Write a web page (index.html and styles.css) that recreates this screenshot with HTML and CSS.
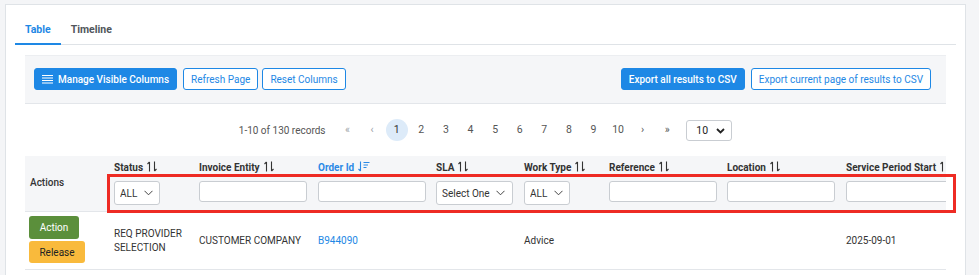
FILE: index.html
```html
<!DOCTYPE html>
<html>
<head>
    <title>Orders</title>
    <link rel="stylesheet" href="styles.css">
</head>
<body>
    <div class="card">
        <div class="tabs">
            <a class="tab active">Table</a>
            <a class="tab">Timeline</a>
        </div>
        <div class="content">
            <div class="toolbar">
                <div class="tool-group">
                    <button class="btn btn-primary">
                        <svg class="btn-icon" width="11" height="9" viewBox="0 0 11 9">
                            <path d="M0 0.5H11M0 3H11M0 5.5H11M0 8H11" stroke="#fff" stroke-width="1.1"/>
                        </svg>
                        Manage Visible Columns
                    </button>
                    <button class="btn btn-outline gap-6">Refresh Page</button>
                    <button class="btn btn-outline gap-4">Reset Columns</button>
                </div>
                <div class="tool-group">
                    <button class="btn btn-primary">Export all results to CSV</button>
                    <button class="btn btn-outline gap-6">Export current page of results to CSV</button>
                </div>
            </div>

            <div class="pager">
                <span class="pager-count">1-10 of 130 records</span>
                <div class="pages">
                    <span class="page muted">&laquo;</span>
                    <span class="page muted">&lsaquo;</span>
                    <span class="page current">1</span>
                    <span class="page">2</span>
                    <span class="page">3</span>
                    <span class="page">4</span>
                    <span class="page">5</span>
                    <span class="page">6</span>
                    <span class="page">7</span>
                    <span class="page">8</span>
                    <span class="page">9</span>
                    <span class="page">10</span>
                    <span class="page">&rsaquo;</span>
                    <span class="page">&raquo;</span>
                </div>
                <div class="per-page">
                    <select><option>10</option></select>
                    <svg class="chev-bold" width="9" height="6" viewBox="0 0 9 6">
                        <path d="M1 1L4.5 4.5L8 1" fill="none" stroke="#222" stroke-width="1.8"/>
                    </svg>
                </div>
            </div>

            <div class="grid-area">
                <div class="grid-wrap">
                    <table class="grid">
                        <colgroup>
                            <col style="width: 84px">
                            <col style="width: 85px">
                            <col style="width: 119px">
                            <col style="width: 118px">
                            <col style="width: 88px">
                            <col style="width: 85px">
                            <col style="width: 118px">
                            <col style="width: 119px">
                            <col style="width: 130px">
                        </colgroup>
                        <thead>
                            <tr>
                                <th class="actions-head">Actions</th>
                                <th>
                                    <div class="label">Status <svg class="sort" width="10" height="11" viewBox="0 0 10 11"><path d="M2.5 10.5V1M0.5 3L2.5 1M7.5 0.5V10M9.5 8L7.5 10" fill="none" stroke="#333" stroke-width="1.1"/></svg></div>
                                    <div class="sel sel-sm"><select><option>ALL</option></select><svg class="chev" width="9" height="6" viewBox="0 0 9 6"><path d="M0.5 0.8L4.5 4.8L8.5 0.8" fill="none" stroke="#444" stroke-width="1"/></svg></div>
                                </th>
                                <th>
                                    <div class="label">Invoice Entity <svg class="sort" width="10" height="11" viewBox="0 0 10 11"><path d="M2.5 10.5V1M0.5 3L2.5 1M7.5 0.5V10M9.5 8L7.5 10" fill="none" stroke="#333" stroke-width="1.1"/></svg></div>
                                    <input type="text" class="filter">
                                </th>
                                <th>
                                    <div class="label label-active">Order Id <svg class="sort" width="12" height="11" viewBox="0 0 12 11"><path d="M2.5 0.5V10M0.5 8L2.5 10M5.5 1.5H11.5M5.5 4H10M5.5 6.5H8.5" fill="none" stroke="#2b8ae6" stroke-width="1.1"/></svg></div>
                                    <input type="text" class="filter">
                                </th>
                                <th>
                                    <div class="label">SLA <svg class="sort" width="10" height="11" viewBox="0 0 10 11"><path d="M2.5 10.5V1M0.5 3L2.5 1M7.5 0.5V10M9.5 8L7.5 10" fill="none" stroke="#333" stroke-width="1.1"/></svg></div>
                                    <div class="sel sel-md"><select><option>Select One</option></select><svg class="chev" width="9" height="6" viewBox="0 0 9 6"><path d="M0.5 0.8L4.5 4.8L8.5 0.8" fill="none" stroke="#444" stroke-width="1"/></svg></div>
                                </th>
                                <th>
                                    <div class="label">Work Type <svg class="sort" width="10" height="11" viewBox="0 0 10 11"><path d="M2.5 10.5V1M0.5 3L2.5 1M7.5 0.5V10M9.5 8L7.5 10" fill="none" stroke="#333" stroke-width="1.1"/></svg></div>
                                    <div class="sel sel-sm"><select><option>ALL</option></select><svg class="chev" width="9" height="6" viewBox="0 0 9 6"><path d="M0.5 0.8L4.5 4.8L8.5 0.8" fill="none" stroke="#444" stroke-width="1"/></svg></div>
                                </th>
                                <th>
                                    <div class="label">Reference <svg class="sort" width="10" height="11" viewBox="0 0 10 11"><path d="M2.5 10.5V1M0.5 3L2.5 1M7.5 0.5V10M9.5 8L7.5 10" fill="none" stroke="#333" stroke-width="1.1"/></svg></div>
                                    <input type="text" class="filter">
                                </th>
                                <th>
                                    <div class="label">Location <svg class="sort" width="10" height="11" viewBox="0 0 10 11"><path d="M2.5 10.5V1M0.5 3L2.5 1M7.5 0.5V10M9.5 8L7.5 10" fill="none" stroke="#333" stroke-width="1.1"/></svg></div>
                                    <input type="text" class="filter">
                                </th>
                                <th>
                                    <div class="label">Service Period Start <svg class="sort" width="10" height="11" viewBox="0 0 10 11"><path d="M2.5 10.5V1M0.5 3L2.5 1M7.5 0.5V10M9.5 8L7.5 10" fill="none" stroke="#333" stroke-width="1.1"/></svg></div>
                                    <input type="text" class="filter">
                                </th>
                            </tr>
                        </thead>
                        <tbody>
                            <tr>
                                <td class="action-cell">
                                    <button class="btn-row btn-green">Action</button>
                                    <button class="btn-row btn-yellow">Release</button>
                                </td>
                                <td>REQ PROVIDER<br>SELECTION</td>
                                <td>CUSTOMER COMPANY</td>
                                <td><a class="link">B944090</a></td>
                                <td></td>
                                <td>Advice</td>
                                <td></td>
                                <td></td>
                                <td>2025-09-01</td>
                            </tr>
                        </tbody>
                    </table>
                </div>
                <div class="highlight"></div>
            </div>
        </div>
    </div>
</body>
</html>
```

FILE: styles.css
```css
body {
    margin: 0;
    background-color: #f4f5f7;
    font-family: Roboto, "Liberation Sans", sans-serif;
    color: #333;
}

.card {
    margin: 4px 13px 0 5px;
    background: #fff;
    border: 1px solid #dfe3e7;
    border-bottom: none;
    padding: 10px 9px 20px 9px;
}

/* tabs */
.tabs {
    display: flex;
    border-bottom: 1px solid #dfe3e7;
}
.tab {
    padding: 8px 10px 7px 10px;
    font-size: 10.5px;
    line-height: 13px;
    font-weight: 700;
    color: #50555b;
    border-bottom: 2px solid transparent;
    margin-bottom: -1px;
}
.tab.active {
    color: #1e88e5;
    border-bottom-color: #1e88e5;
}

.content {
    padding: 10px;
}

/* toolbar */
.toolbar {
    display: flex;
    justify-content: space-between;
    align-items: center;
    background: #f5f6f8;
    border-top: 1px solid #eceef1;
    border-bottom: 1px solid #e3e6ea;
    padding: 12px 15px 13px 9px;
}
.tool-group {
    display: flex;
}
.btn {
    height: 22px;
    padding: 0 7px;
    font-family: Roboto, sans-serif;
    font-size: 10px;
    border-radius: 3px;
    display: flex;
    align-items: center;
    cursor: pointer;
}
.btn-primary {
    background: #1e88e5;
    border: 1px solid #1e88e5;
    color: #fff;
    font-weight: 500;
}
.btn-outline {
    background: #fff;
    border: 1px solid #1e88e5;
    color: #1e88e5;
}
.gap-6 { margin-left: 6px; }
.gap-4 { margin-left: 4px; }
.btn-icon {
    margin-right: 5px;
}

/* pager */
.pager {
    display: flex;
    justify-content: center;
    align-items: center;
    margin: 15px 0;
    font-size: 10px;
    color: #555;
}
.pager-count {
    margin-right: 11px;
}
.pages {
    display: flex;
    gap: 2.6px;
}
.page {
    width: 22px;
    height: 22px;
    line-height: 22px;
    text-align: center;
    border-radius: 50%;
    font-size: 10.5px;
}
.page.muted {
    color: #9aa0a6;
}
.page.current {
    background: #ddebf9;
    color: #333;
}
.per-page {
    position: relative;
    margin-left: 8px;
}
.per-page select {
    appearance: none;
    width: 46px;
    height: 21px;
    border: 1px solid #c9cdd2;
    border-radius: 3px;
    background: #fff;
    font-family: Roboto, sans-serif;
    font-size: 10.5px;
    color: #222;
    padding: 0 0 0 9px;
}
.chev-bold {
    position: absolute;
    right: 7px;
    top: 8px;
    pointer-events: none;
}

/* table */
.grid-area {
    position: relative;
}
.grid-wrap {
    overflow: hidden;
}
.grid {
    table-layout: fixed;
    border-collapse: collapse;
    width: 946px;
    font-size: 10px;
    color: #333;
}
.grid th {
    background: #f5f6f8;
    text-align: left;
    vertical-align: top;
    padding: 6px 5px 6px 5px;
    border-bottom: 1px solid #e3e6ea;
    font-weight: 400;
}
.grid th.actions-head {
    vertical-align: middle;
    padding-bottom: 9px;
    font-weight: 500;
    font-size: 10px;
}
.label {
    font-weight: 700;
    height: 12px;
    line-height: 12px;
    margin-bottom: 7px;
    white-space: nowrap;
    display: flex;
    align-items: center;
}
.label-active {
    color: #2b8ae6;
}
.sort {
    margin-left: 4px;
    margin-top: -3px;
    flex-shrink: 0;
}
.filter {
    display: block;
    box-sizing: border-box;
    width: 108px;
    height: 21px;
    margin-top: 2px;
    border: 1px solid #c9cdd2;
    border-radius: 3px;
    background: #fff;
}
.sel {
    position: relative;
}
.sel select {
    appearance: none;
    height: 24px;
    border: 1px solid #c9cdd2;
    border-radius: 3px;
    background: #fff;
    font-family: Roboto, sans-serif;
    font-size: 10px;
    color: #333;
    padding: 0 0 0 5px;
}
.sel-sm select { width: 46px; }
.sel-md select { width: 77px; }
.sel .chev {
    position: absolute;
    top: 9px;
    pointer-events: none;
}
.sel-sm .chev { left: 30px; }
.sel-md .chev { left: 60px; }

.grid td {
    height: 58px;
    box-sizing: border-box;
    padding: 0 5px;
    vertical-align: middle;
    border-bottom: 1px solid #e3e6ea;
    line-height: 14px;
}
.grid td.action-cell {
    vertical-align: top;
    padding: 4px 4px;
}
.btn-row {
    display: block;
    font-family: Roboto, sans-serif;
    font-size: 10px;
    border: none;
    border-radius: 3px;
    padding: 0;
}
.btn-green {
    background: #5b8f3b;
    color: #fff;
    width: 50px;
    height: 23px;
}
.btn-yellow {
    background: #f9ba3c;
    color: #222;
    width: 56px;
    height: 22px;
    margin-top: 2px;
}
.link {
    color: #1e88e5;
}

.highlight {
    position: absolute;
    left: 82px;
    top: 18px;
    width: 843px;
    height: 33px;
    border: 3px solid #ee2b24;
    pointer-events: none;
}
```
